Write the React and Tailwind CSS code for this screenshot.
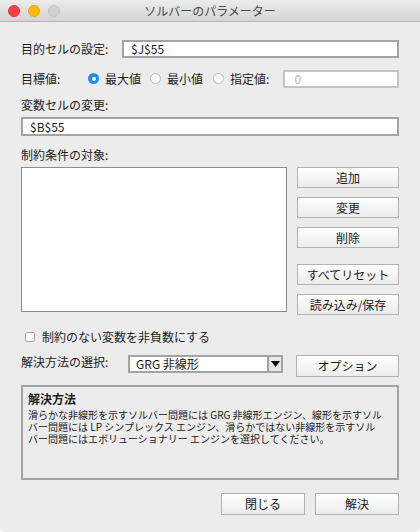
import React from "react";

const font = { fontFamily: '"Noto Sans CJK JP", "Noto Sans", "Liberation Sans", sans-serif' };

function Btn({ children, className = "" }) {
  return (
    <div
      className={
        "flex items-center justify-center border-[1.5px] border-[#b2b2b2] bg-gradient-to-b from-[#ffffff] to-[#ececec] text-[12px] text-[#1a1a1a] " +
        className
      }
    >
      {children}
    </div>
  );
}

function Radio({ on }) {
  return on ? (
    <div className="flex h-[11px] w-[11px] items-center justify-center rounded-full bg-[#1d8dfa]">
      <div className="h-[4px] w-[4px] rounded-full bg-white" />
    </div>
  ) : (
    <div className="h-[11px] w-[11px] rounded-full border border-[#b9b9b9] bg-[#fafafa]" />
  );
}

export default function App() {
  return (
    <div className="h-[532px] w-[420px] bg-white" style={font}>
      <div className="flex h-[532px] w-[420px] flex-col overflow-hidden rounded-b-[5px] bg-[#ececec] text-[#1c1c1c]">
        {/* title bar */}
        <div className="relative flex h-[22px] shrink-0 items-center justify-center border-b border-[#b4b4b4] bg-gradient-to-b from-[#ececec] to-[#d4d4d4]">
          <div className="absolute left-[8px] top-[5px] flex gap-[8px]">
            <div className="h-[12px] w-[12px] rounded-full bg-[#fc3e4b] border border-[#e2363f]" />
            <div className="h-[12px] w-[12px] rounded-full bg-[#fdbb0b] border border-[#e0a40a]" />
            <div className="h-[12px] w-[12px] rounded-full bg-[#d2d2d2] border border-[#c0c0c0]" />
          </div>
          <span className="text-[12px] leading-none text-[#4a4a4a]">ソルバーのパラメーター</span>
        </div>

        <div className="flex flex-col px-[21px]">
          {/* row 1 */}
          <div className="mt-[18px] flex h-[17px] items-center">
            <span className="w-[101px] text-[12px] leading-none">目的セルの設定:</span>
            <div className="flex h-[18px] flex-1 items-center border-2 border-[#a3a3a3] bg-white pl-[7px] text-[12px]">
              $J$55
            </div>
          </div>

          {/* row 2 */}
          <div className="mt-[13px] flex h-[17px] items-center text-[12px]">
            <span className="w-[67px] leading-none">目標値:</span>
            <Radio on />
            <span className="ml-[6px] leading-none">最大値</span>
            <div className="ml-[9px]">
              <Radio />
            </div>
            <span className="ml-[6px] leading-none">最小値</span>
            <div className="ml-[10px]">
              <Radio />
            </div>
            <span className="ml-[6px] leading-none">指定値:</span>
            <div className="ml-[14px] flex h-[18px] flex-1 items-center border-2 border-[#c4c4c4] bg-white pl-[9px] text-[12px] text-[#b5b5b5]">
              0
            </div>
          </div>

          {/* row 3 */}
          <div className="mt-[12px] text-[12px] leading-none">変数セルの変更:</div>
          <div className="mt-[6px] flex h-[19px] items-center border-2 border-[#a3a3a3] bg-white pl-[7px] text-[12px]">
            $B$55
          </div>

          {/* constraints */}
          <div className="mt-[13px] text-[12px] leading-none">制約条件の対象:</div>
          <div className="mt-[6px] flex gap-[10px]">
            <div className="h-[145px] w-[266px] border border-[#8c8c8c] bg-white" />
            <div className="flex flex-1 flex-col">
              <Btn className="h-[21px]">追加</Btn>
              <Btn className="mt-[9px] h-[21px]">変更</Btn>
              <Btn className="mt-[9px] h-[21px]">削除</Btn>
              <Btn className="mt-[16px] h-[21px]">すべてリセット</Btn>
              <Btn className="mt-[9px] h-[21px]">読み込み/保存</Btn>
            </div>
          </div>

          {/* checkbox */}
          <div className="mt-[16px] flex items-center">
            <div className="ml-[4px] h-[10px] w-[10px] rounded-[2px] border border-[#a8a8a8] bg-white" />
            <span className="ml-[7px] text-[12px] leading-none">制約のない変数を非負数にする</span>
          </div>

          {/* solving method */}
          <div className="mt-[12px] flex items-start">
            <span className="mt-[0px] w-[107px] text-[12px] leading-[14px]">解決方法の選択:</span>
            <div className="flex h-[18px] w-[155px] border-2 border-[#a3a3a3] bg-white">
              <div className="flex flex-1 items-center pl-[6px] text-[12px] leading-none">GRG 非線形</div>
              <div className="flex w-[14px] items-center justify-center border-l-2 border-[#a3a3a3] bg-[#e8e8e8]">
                <svg width="9" height="6" viewBox="0 0 9 6">
                  <path d="M0 0 H9 L4.5 6 Z" fill="#111" />
                </svg>
              </div>
            </div>
            <Btn className="ml-[13px] h-[22px] flex-1">オプション</Btn>
          </div>

          {/* description box */}
          <div className="mt-[8px] h-[95px] border-2 border-[#a3a3a3] px-[5px] pt-[5px]">
            <div className="text-[12px] font-bold leading-[14px]">解決方法</div>
            <div className="mt-[3px] flex flex-col whitespace-nowrap text-[10px] leading-[12px] text-[#1a1a1a]">
              <span>滑らかな非線形を示すソルバー問題には GRG 非線形エンジン、線形を示すソル</span>
              <span>バー問題には LP シンプレックス エンジン、滑らかではない非線形を示すソル</span>
              <span>バー問題にはエボリューショナリー エンジンを選択してください。</span>
            </div>
          </div>

          {/* bottom buttons */}
          <div className="mt-[13px] flex justify-end gap-[10px]">
            <Btn className="h-[22px] w-[84px]">閉じる</Btn>
            <Btn className="h-[22px] w-[84px]">解決</Btn>
          </div>
        </div>
      </div>
    </div>
  );
}
